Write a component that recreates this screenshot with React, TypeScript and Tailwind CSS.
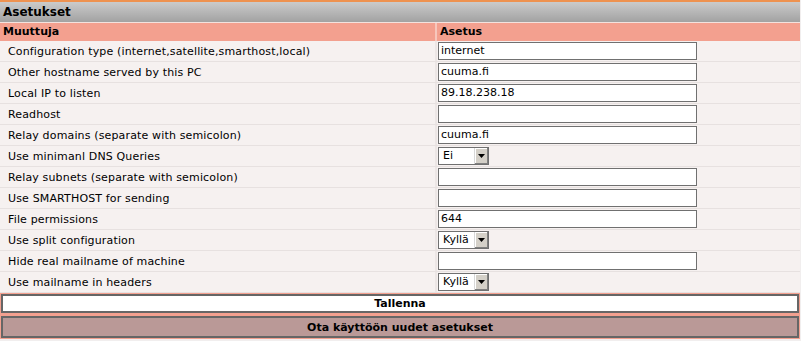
import React from "react";

type Row = { label: string; kind: "text" | "select"; value: string };

const rows: Row[] = [
  { label: "Configuration type (internet,satellite,smarthost,local)", kind: "text", value: "internet" },
  { label: "Other hostname served by this PC", kind: "text", value: "cuuma.fi" },
  { label: "Local IP to listen", kind: "text", value: "89.18.238.18" },
  { label: "Readhost", kind: "text", value: "" },
  { label: "Relay domains (separate with semicolon)", kind: "text", value: "cuuma.fi" },
  { label: "Use minimanl DNS Queries", kind: "select", value: "Ei" },
  { label: "Relay subnets (separate with semicolon)", kind: "text", value: "" },
  { label: "Use SMARTHOST for sending", kind: "text", value: "" },
  { label: "File permissions", kind: "text", value: "644" },
  { label: "Use split configuration", kind: "select", value: "Kyllä" },
  { label: "Hide real mailname of machine", kind: "text", value: "" },
  { label: "Use mailname in headers", kind: "select", value: "Kyllä" },
];

function Select({ value }: { value: string }) {
  return (
    <div className="flex h-[18px] w-[51px] border border-[#707070] bg-white">
      <span className="flex-1 pl-[4px] leading-[16px] text-black">{value}</span>
      <span className="flex w-[14px] items-center justify-center border-l border-[#d8d8d8] bg-[#d4d0c8] shadow-[inset_-1px_-1px_0_#808080,inset_1px_1px_0_#ffffff]">
        <svg width="7" height="4" viewBox="0 0 7 4">
          <path d="M0 0h7L3.5 4z" fill="#000" />
        </svg>
      </span>
    </div>
  );
}

export default function App() {
  return (
    <div className="h-[341px] w-[801px] bg-[#f1eeee] font-['DejaVu_Sans',Verdana,sans-serif] text-[11px] text-black">
      <div className="w-[800px]">
        <div className="h-[2px] bg-[#ee9250]" />
        <div className="h-[20px] bg-gradient-to-b from-[#cbcbcb] to-[#a2a2a2] pl-[3px] text-[12px] font-bold leading-[20px]">
          Asetukset
        </div>
        <div className="flex h-[19px] border-t border-[#f3e2de] bg-[#f3a08f] font-bold leading-[18px]">
          <div className="w-[435px] pl-[3px]">Muuttuja</div>
          <div className="border-l-2 border-[#f7c7bc] pl-[3px]">Asetus</div>
        </div>
        {rows.map((r, i) => (
          <div key={i} className="flex h-[21px] border-b border-[#e7e1e0] bg-[#f6f1f0]">
            <div className="w-[435px] pl-[8px] leading-[21px] tracking-[0.15px]">{r.label}</div>
            <div className="flex flex-1 items-center border-l-2 border-[#ece6e5] pl-[1px]">
              {r.kind === "text" ? (
                <div className="h-[18px] w-[259px] border border-[#707070] bg-white pl-[2px] leading-[16px]">
                  {r.value}
                </div>
              ) : (
                <Select value={r.value} />
              )}
            </div>
          </div>
        ))}
        <div className="flex flex-col gap-[3px] bg-[#f3a08f] p-[1px]">
          <div className="h-[19px] border-2 border-[#666] bg-white text-center font-bold leading-[15px]">
            Tallenna
          </div>
          <div className="h-[22px] border-2 border-[#666] bg-[#ba9997] text-center font-bold leading-[19px]">
            Ota käyttöön uudet asetukset
          </div>
        </div>
      </div>
    </div>
  );
}
